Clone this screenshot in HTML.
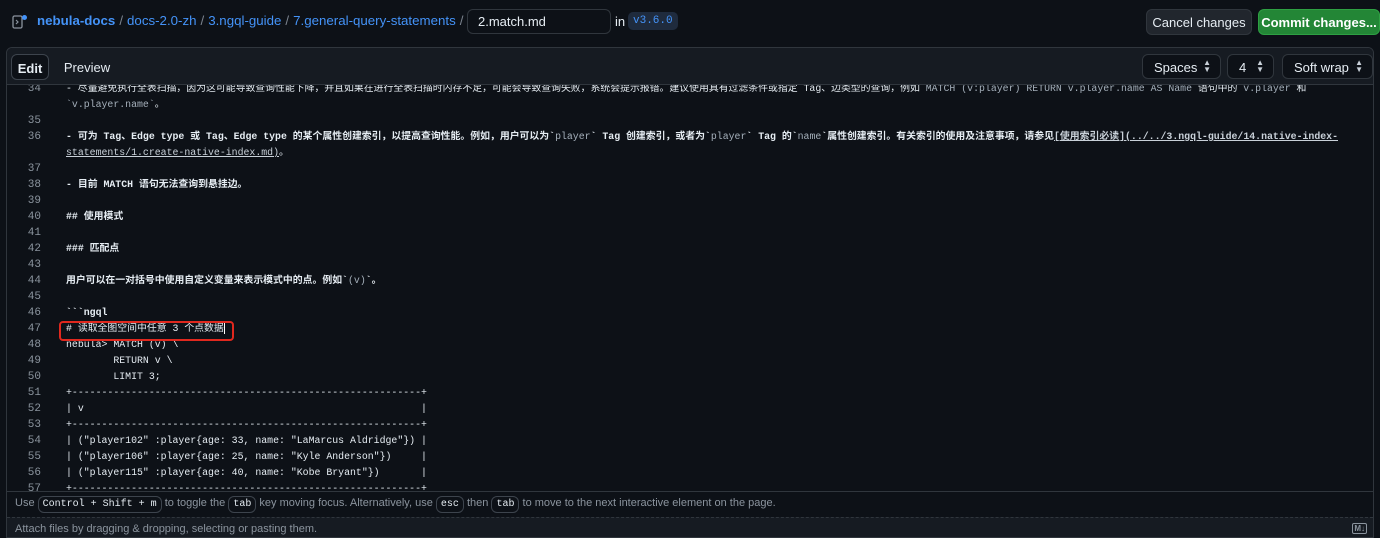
<!DOCTYPE html>
<html><head><meta charset="utf-8"><style>
*{margin:0;padding:0;box-sizing:border-box}
body{width:1380px;height:538px;overflow:hidden;background:#0d1117;color:#e6edf3;font-family:"Liberation Sans","Noto Sans CJK SC",sans-serif;font-size:14px;position:relative}
.hdr{position:absolute;top:0;left:0;right:0;height:45px}
.bc{position:absolute;left:37px;top:13px;font-size:13.3px;color:#e6edf3}
.bc a{color:#4493f8;text-decoration:none}
.bc .s{color:#7d8590;margin:0 4px}
.fname{position:absolute;left:467px;top:9px;width:144px;height:25px;border:1px solid #30363d;border-radius:6px;background:#0d1117;font-size:13px;padding:4px 0 0 10px}
.in{position:absolute;left:615px;top:14px;font-size:13px}
.ver{position:absolute;left:628px;top:12px;background:#1f2b3d;color:#4493f8;font-family:"Liberation Mono",monospace;font-size:11px;padding:3px 5px;border-radius:5px}
.btn{position:absolute;top:9px;height:26px;border-radius:6px;font-size:13px;padding-top:5px;text-align:center}
.box{position:absolute;left:6px;top:47px;width:1368px;height:491px;border:1px solid #30363d;border-radius:6px 6px 0 0;overflow:hidden}
.tb{position:absolute;left:0;top:0;right:0;height:37px;background:#161b22;border-bottom:1px solid #30363d;z-index:2}
.tab{position:absolute;top:6px;height:26px;font-size:13px;padding-top:6px;text-align:center;border-radius:6px}
.sel{position:absolute;top:6px;height:25px;border:1px solid #30363d;border-radius:6px;background:#0d1117;font-size:13px;padding:5px 0 0 11px}
.sel i{position:absolute;right:9px;top:4px;font-style:normal;font-size:8px;line-height:7px;color:#c9d1d9}
.ed{position:absolute;left:0;top:33px;right:0;height:410px;overflow:hidden}
.row{position:absolute;left:0;height:16px;line-height:16px;font-family:"Liberation Mono","Noto Sans CJK SC",monospace;font-size:9.87px;white-space:pre;width:1366px}
.row .n{position:absolute;left:0;width:34px;text-align:right;color:#8b949e;font-size:11px}
.row .t{position:absolute;left:59px;color:#e6edf3}
.b{font-weight:bold}
.u{text-decoration:underline;color:#c9d1d9}
.g{color:#a5b0bb}
.help{position:absolute;left:0;right:0;top:443px;height:26px;border-top:1px solid #30363d;background:#0d1117;font-size:11px;color:#8b949e;padding:4px 0 0 8px}
.kbd{display:inline-block;border:1px solid #3d444d;border-radius:6px;padding:0 4px;font-family:"Liberation Mono",monospace;font-size:10px;color:#e6edf3;line-height:15px}
.att{position:absolute;left:0;right:0;top:469px;height:22px;border-top:1px dashed #30363d;background:#161b22;font-size:11px;color:#8b949e;padding:5px 0 0 8px}
</style></head><body>
<div class="hdr">
<svg style="position:absolute;left:12px;top:14px" width="16" height="16" viewBox="0 0 16 16"><rect x="1" y="2" width="9" height="12" rx="1.5" fill="none" stroke="#8b949e" stroke-width="1.3"/><path d="M4 6l2 2-2 2" fill="none" stroke="#8b949e" stroke-width="1.2"/><circle cx="12.5" cy="3.5" r="2.5" fill="#4493f8"/></svg>
<div class="bc"><a style="font-weight:bold">nebula-docs</a><span class="s">/</span><a>docs-2.0-zh</a><span class="s">/</span><a>3.ngql-guide</a><span class="s">/</span><a>7.general-query-statements</a><span class="s">/</span></div>
<div class="fname">2.match.md</div>
<div class="in">in</div>
<div class="ver">v3.6.0</div>
<div class="btn" style="left:1146px;width:106px;background:#21262d;border:1px solid #30363d">Cancel changes</div>
<div class="btn" style="left:1258px;width:122px;background:#238636;border:1px solid #2ea043;color:#fff;font-weight:bold">Commit changes...</div>
</div>
<div class="box">
<div class="tb">
<div class="tab" style="left:4px;width:38px;background:#0d1117;border:1px solid #3d444d;font-weight:bold">Edit</div>
<div class="tab" style="left:48px;width:64px">Preview</div>
<div class="sel" style="left:1135px;width:79px">Spaces<i>▲<br>▼</i></div>
<div class="sel" style="left:1220px;width:47px">4<i>▲<br>▼</i></div>
<div class="sel" style="left:1275px;width:91px">Soft wrap<i>▲<br>▼</i></div>
</div>
<div class="ed">
<div class="row" style="top:0px"><span class="n">34</span><span class="t">- 尽量避免执行全表扫描，因为这可能导致查询性能下降，并且如果在进行全表扫描时内存不足，可能会导致查询失败，系统会提示报错。建议使用具有过滤条件或指定 Tag、边类型的查询，例如 <span class="g">MATCH (v:player) RETURN v.player.name AS Name</span> 语句中的 <span class="g">v.player</span> 和</span></div>
<div class="row" style="top:16px"><span class="t"><span class="g">&#96;v.player.name&#96;</span>。</span></div>
<div class="row" style="top:32px"><span class="n">35</span></div>
<div class="row" style="top:48px"><span class="n">36</span><span class="t b">- 可为 Tag、Edge type 或 Tag、Edge type 的某个属性创建索引，以提高查询性能。例如，用户可以为&#96;<span class="g" style="font-weight:normal">player</span>&#96; Tag 创建索引，或者为&#96;<span class="g" style="font-weight:normal">player</span>&#96; Tag 的&#96;<span class="g" style="font-weight:normal">name</span>&#96;属性创建索引。有关索引的使用及注意事项，请参见<span class="u">[使用索引必读](../../3.ngql-guide/14.native-index-</span></span></div>
<div class="row" style="top:64px"><span class="t"><span class="u">statements/1.create-native-index.md)</span>。</span></div>
<div class="row" style="top:80px"><span class="n">37</span></div>
<div class="row" style="top:96px"><span class="n">38</span><span class="t b">- 目前 MATCH 语句无法查询到悬挂边。</span></div>
<div class="row" style="top:112px"><span class="n">39</span></div>
<div class="row" style="top:128px"><span class="n">40</span><span class="t b">## 使用模式</span></div>
<div class="row" style="top:144px"><span class="n">41</span></div>
<div class="row" style="top:160px"><span class="n">42</span><span class="t b">### 匹配点</span></div>
<div class="row" style="top:176px"><span class="n">43</span></div>
<div class="row" style="top:192px"><span class="n">44</span><span class="t b">用户可以在一对括号中使用自定义变量来表示模式中的点。例如&#96;<span class="g" style="font-weight:normal">(v)</span>&#96;。</span></div>
<div class="row" style="top:208px"><span class="n">45</span></div>
<div class="row" style="top:224px"><span class="n">46</span><span class="t b">&#96;&#96;&#96;ngql</span></div>
<div class="row" style="top:240px"><span class="n">47</span><span class="t"># 读取全图空间中任意 3 个点数据<span style="border-left:1px solid #fff"></span></span></div>
<div class="row" style="top:256px"><span class="n">48</span><span class="t">nebula&gt; MATCH (v) \</span></div>
<div class="row" style="top:272px"><span class="n">49</span><span class="t">        RETURN v \</span></div>
<div class="row" style="top:288px"><span class="n">50</span><span class="t">        LIMIT 3;</span></div>
<div class="row" style="top:304px"><span class="n">51</span><span class="t">+-----------------------------------------------------------+</span></div>
<div class="row" style="top:320px"><span class="n">52</span><span class="t">| v                                                         |</span></div>
<div class="row" style="top:336px"><span class="n">53</span><span class="t">+-----------------------------------------------------------+</span></div>
<div class="row" style="top:352px"><span class="n">54</span><span class="t">| ("player102" :player{age: 33, name: "LaMarcus Aldridge"}) |</span></div>
<div class="row" style="top:368px"><span class="n">55</span><span class="t">| ("player106" :player{age: 25, name: "Kyle Anderson"})     |</span></div>
<div class="row" style="top:384px"><span class="n">56</span><span class="t">| ("player115" :player{age: 40, name: "Kobe Bryant"})       |</span></div>
<div class="row" style="top:400px"><span class="n">57</span><span class="t">+-----------------------------------------------------------+</span></div>
</div>
<div style="position:absolute;left:52px;top:273px;width:175px;height:20px;border:2px solid #e0281e;border-radius:4px;z-index:3"></div>
<div class="help">Use <span class="kbd">Control + Shift + m</span> to toggle the <span class="kbd">tab</span> key moving focus. Alternatively, use <span class="kbd">esc</span> then <span class="kbd">tab</span> to move to the next interactive element on the page.</div>
<div class="att">Attach files by dragging &amp; dropping, selecting or pasting them.<span style="position:absolute;right:6px;top:5px;font-size:8px;font-weight:bold;border:1px solid #8b949e;border-radius:2px;padding:0 1px;line-height:9px">M↓</span></div>
</div>
</body></html>
